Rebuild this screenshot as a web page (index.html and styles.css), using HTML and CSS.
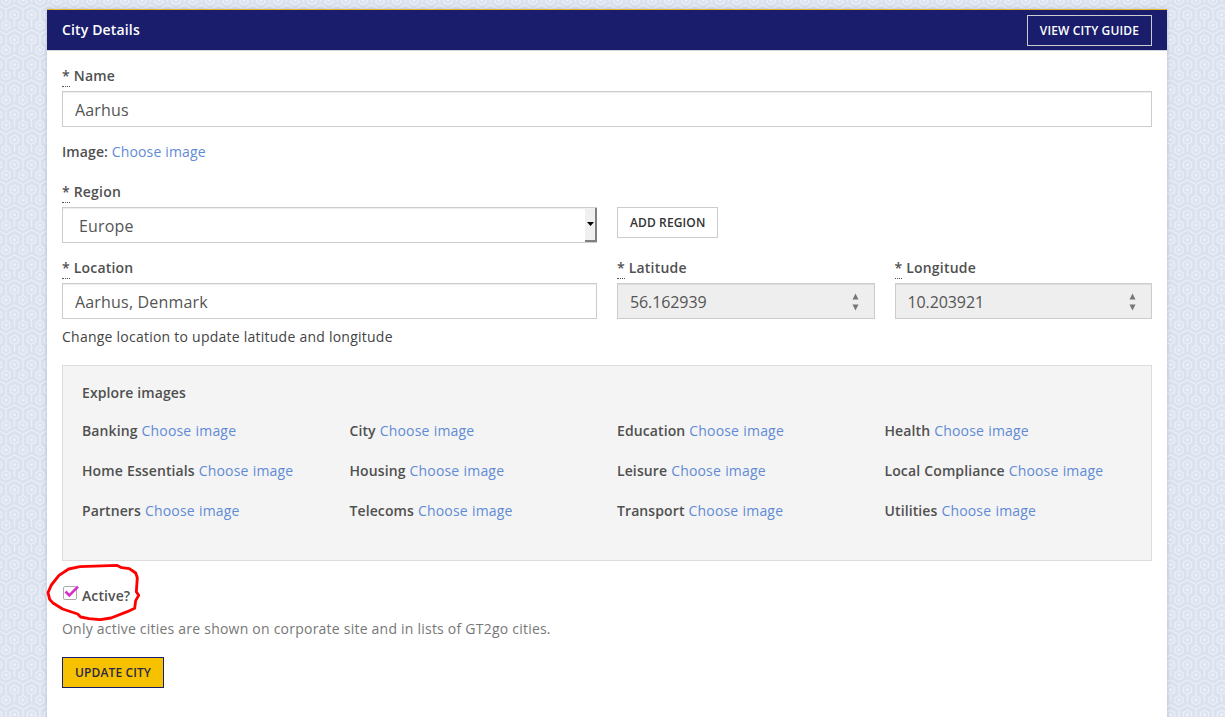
FILE: index.html
```html
<!DOCTYPE html>
<html lang="en">
<head>
<meta charset="utf-8">
<title>City Details</title>
<link rel="stylesheet" href="styles.css">
</head>
<body>
<main class="panel">
  <header class="panel-head">
    <h1 class="panel-title">City Details</h1>
    <a class="btn btn-ghost">View city guide</a>
  </header>
  <form class="panel-body">
    <div class="field">
      <label class="label"><abbr class="req">*</abbr> Name</label>
      <input class="input" type="text" value="Aarhus">
    </div>
    <div class="image-row"><b class="strong">Image:</b> <a class="link">Choose image</a></div>
    <div class="region-row">
      <div class="field">
        <label class="label"><abbr class="req">*</abbr> Region</label>
        <div class="input select"><span>Europe</span>
          <span class="select-btn"><svg width="7" height="4" viewBox="0 0 7 4"><path d="M0 0h7L3.500 4z" fill="#000"/></svg></span>
        </div>
      </div>
      <a class="btn btn-region">Add region</a>
    </div>
    <div class="location-row">
      <div class="field">
        <label class="label"><abbr class="req">*</abbr> Location</label>
        <input class="input" type="text" value="Aarhus, Denmark">
      </div>
      <div class="field">
        <label class="label"><abbr class="req">*</abbr> Latitude</label>
        <div class="input number"><span>56.162939</span>
          <svg width="7" height="18" viewBox="0 0 7 18"><path d="M.5 6.500L3.500.5l3 6zM.5 11.500h6l-3 6z" fill="#777"/></svg>
        </div>
      </div>
      <div class="field">
        <label class="label"><abbr class="req">*</abbr> Longitude</label>
        <div class="input number"><span>10.203921</span>
          <svg width="7" height="18" viewBox="0 0 7 18"><path d="M.5 6.500L3.500.5l3 6zM.5 11.500h6l-3 6z" fill="#777"/></svg>
        </div>
      </div>
    </div>
    <p class="hint">Change location to update latitude and longitude</p>
    <section class="explore">
      <h2 class="explore-title">Explore images</h2>
      <div class="explore-grid">
        <div><b class="strong">Banking</b> <a class="link">Choose image</a></div>
        <div><b class="strong">City</b> <a class="link">Choose image</a></div>
        <div><b class="strong">Education</b> <a class="link">Choose image</a></div>
        <div><b class="strong">Health</b> <a class="link">Choose image</a></div>
        <div><b class="strong">Home Essentials</b> <a class="link">Choose image</a></div>
        <div><b class="strong">Housing</b> <a class="link">Choose image</a></div>
        <div><b class="strong">Leisure</b> <a class="link">Choose image</a></div>
        <div><b class="strong">Local Compliance</b> <a class="link">Choose image</a></div>
        <div><b class="strong">Partners</b> <a class="link">Choose image</a></div>
        <div><b class="strong">Telecoms</b> <a class="link">Choose image</a></div>
        <div><b class="strong">Transport</b> <a class="link">Choose image</a></div>
        <div><b class="strong">Utilities</b> <a class="link">Choose image</a></div>
      </div>
    </section>
    <div class="active-row">
      <svg class="check" width="17" height="15" viewBox="0 0 17 15">
        <rect x="1.500" y="1.500" width="13" height="13" rx="1.500" fill="#fff" stroke="#aaa"/>
        <path d="M3.500 6.500L7.300 10.500L16 1.600" fill="none" stroke="#d42fc8" stroke-width="2.600"/>
      </svg>
      <span class="strong">Active?</span>
      <svg class="marker" width="100" height="66" viewBox="0 0 300 198">
        <path d="M86 42L120 35L230 31L245 38L268 41L287 54L292 68L289 110L296 121L287 137L284 160L262 170L213 189L180 194L147 191L122 186L113 177L68 162L40 145L29 133L24 113L34 90L57 61Z" fill="none" stroke="#f00" stroke-width="8.500" stroke-linejoin="round"/>
      </svg>
    </div>
    <p class="note">Only active cities are shown on corporate site and in lists of GT2go cities.</p>
    <a class="btn btn-primary">Update city</a>
  </form>
</main>
</body>
</html>
```
FILE: styles.css
```css
* { box-sizing: border-box; }

body {
  margin: 0;
  height: 717px;
  overflow: hidden;
  padding: 9px 58px 0 47px;
  font: 14px/20px "Open Sans", sans-serif;
  color: #444;
  background: #dbe1ed url("data:image/svg+xml,%3Csvg xmlns='http://www.w3.org/2000/svg' width='17' height='25' viewBox='0 0 17 25'%3E%3Cg fill='none' stroke='%23eaeffa' stroke-width='1.4'%3E%3Cpath d='M8.500 8.200l4 2.300v4.500l-4 2.300l-4-2.300v-4.500zM8.500 17.300V28M0 18.500l4 2.300v4.600l-4 2.300l-4-2.300v-4.600zM17 18.500l4 2.300v4.600l-4 2.300l-4-2.300v-4.600zM0 -6.500l4 2.300v4.600l-4 2.300l-4-2.300v-4.600zM17 -6.500l4 2.300v4.600l-4 2.300l-4-2.300v-4.600zM0 7.500V18.500M17 7.500V18.500M0 7.500l8.500-4.500l8.500 4.500'/%3E%3C/g%3E%3Cg fill='%23eaeffa'%3E%3Ccircle cx='8.500' cy='12.700' r='1.800'/%3E%3Ccircle cx='0' cy='23' r='1.800'/%3E%3Ccircle cx='17' cy='23' r='1.800'/%3E%3C/g%3E%3C/svg%3E") 6px 2px;
}

.panel {
  height: 720px;
  background: #fff;
  border-top: 1px solid #e3b52c;
  box-shadow: 0 0 4px rgba(60, 70, 110, .25);
}

.panel-head {
  display: flex;
  align-items: center;
  justify-content: space-between;
  height: 41px;
  padding: 0 15px;
  background: #191d6c;
  border-bottom: 1px solid #d5d5dc;
}

.panel-title {
  margin: 0;
  font-size: 14px;
  font-weight: 600;
  letter-spacing: .15px;
  color: #fff;
}

.btn {
  display: inline-block;
  height: 31px;
  padding: 0 12px;
  border: 1px solid #ccc;
  font-size: 12px;
  font-weight: 600;
  line-height: 29px;
  letter-spacing: .12px;
  text-transform: uppercase;
  white-space: nowrap;
  color: #333;
}

.btn-ghost { color: #fff; }
.btn-region { margin-top: 25px; background: #fff; }
.btn-primary { background: #f6c200; border-color: #191d6c; color: #2c2848; }

.panel-body { padding: 15px 15px 0; }

.label {
  display: block;
  height: 20px;
  margin-bottom: 5px;
  font-weight: 600;
  letter-spacing: .2px;
  color: #505050;
}

.req {
  display: inline-block;
  height: 21px;
  border-bottom: 1px dotted #555;
  vertical-align: top;
}

.strong { font-weight: 600; letter-spacing: .1px; color: #505050; }
.link { letter-spacing: .17px; color: #5f8bd6; }

.input {
  display: block;
  width: 100%;
  height: 36px;
  margin: 0;
  padding: 1px 12px 0;
  border: 1px solid #ccc;
  border-radius: 0;
  background: #fff;
  box-shadow: inset 0 1px 1px rgba(0, 0, 0, .075);
  font: 16px/34px "Open Sans", sans-serif;
  letter-spacing: .18px;
  color: #555;
}

.image-row { margin: 15px 0 20px; }

.region-row {
  display: grid;
  grid-template-columns: 535px auto;
  justify-content: start;
  align-items: start;
  gap: 20px;
  margin-bottom: 15px;
}

.select {
  display: flex;
  justify-content: space-between;
  padding: 0 0 0 16px;
  line-height: 37px;
}

.select-btn {
  display: flex;
  align-items: center;
  justify-content: flex-end;
  width: 12px;
  height: 34px;
  margin-right: -1px;
  padding-right: 1px;
  background: #f0f0f0;
  border-right: 2px solid #808080;
  border-bottom: 2px solid #808080;
}

.location-row {
  display: grid;
  grid-template-columns: 535px 1fr 1fr;
  gap: 20px;
}

.number {
  display: flex;
  align-items: center;
  justify-content: space-between;
  padding-right: 15px;
  background: #eee;
  letter-spacing: -.1px;
}

.hint { margin: 8px 0 18px; letter-spacing: .24px; }

.explore {
  height: 196px;
  padding: 17px 0 0 19px;
  background: #f4f4f4;
  border: 1px solid #ddd;
}

.explore-title {
  margin: 0 0 18px;
  font-size: 14px;
  line-height: 20px;
  font-weight: 600;
  letter-spacing: .1px;
  color: #505050;
}

.explore-grid {
  display: grid;
  grid-template-columns: repeat(4, 267.5px);
  row-gap: 20px;
  word-spacing: .4px;
}

.active-row {
  position: relative;
  display: flex;
  gap: 3px;
  height: 20px;
  margin-top: 25px;
}

.check { margin-top: -1px; }

.marker {
  position: absolute;
  left: -22px;
  top: -31px;
}

.note { margin: 13px 0 18px; letter-spacing: .225px; color: #777; }
```
